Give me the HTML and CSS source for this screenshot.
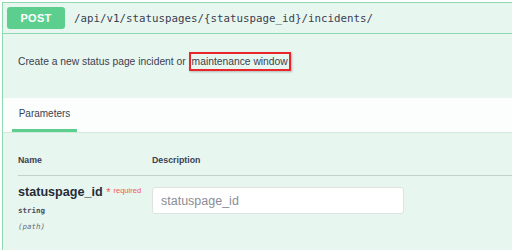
FILE: index.html
```html
<!DOCTYPE html>
<html lang="en">

<head>
    <meta charset="UTF-8">
    <meta name="viewport" content="width=device-width, initial-scale=1.0">
    <title>POST incidents</title>
    <link rel="stylesheet" href="styles.css">
</head>

<body>
    <div class="opblock">
        <div class="opblock-summary">
            <span class="method">POST</span>
            <span class="path">/api/v1/statuspages/{statuspage_id}/incidents/</span>
        </div>
        <div class="opblock-description">
            <p>Create a new status page incident or <span class="highlight">maintenance window</span></p>
        </div>
        <div class="tab-header">
            <div class="tab">Parameters</div>
        </div>
        <div class="parameters">
            <div class="param-head">
                <div class="col-name">Name</div>
                <div class="col-desc">Description</div>
            </div>
            <div class="param-row">
                <div class="col-name">
                    <div class="param-name">statuspage_id <span class="required">* <sup>required</sup></span></div>
                    <div class="param-type">string</div>
                    <div class="param-in">(path)</div>
                </div>
                <div class="col-desc">
                    <input type="text" placeholder="statuspage_id">
                </div>
            </div>
        </div>
    </div>
</body>

</html>
```

FILE: styles.css
```css
body {
    margin: 0;
    padding: 0;
    height: 250px;
    background-color: #fff;
    font-family: 'Liberation Sans', Arial, sans-serif;
    color: #3b4151;
    overflow: hidden;
}

.opblock {
    margin: 2px -10px 0 2px;
    height: 248px;
    border: 1px solid #8fd9b0;
    border-bottom: none;
    background-color: #e8f6f0;
}

.opblock-summary {
    display: flex;
    align-items: center;
    height: 30px;
    padding: 0 4px;
    border-bottom: 1px solid #8fd9b0;
}

.method {
    display: flex;
    align-items: center;
    justify-content: center;
    width: 58px;
    height: 22px;
    background-color: #5ccf8f;
    border-radius: 3px;
    color: #fff;
    font-weight: bold;
    font-size: 11px;
    letter-spacing: 0.3px;
}

.path {
    margin-left: 9px;
    font-family: 'DejaVu Sans Mono', monospace;
    font-size: 10.8px;
    color: #3b4151;
}

.opblock-description {
    box-sizing: border-box;
    height: 64px;
    padding: 22px 15px 0;
}

.opblock-description p {
    margin: 0;
    font-size: 10.3px;
    color: #3b4151;
}

.highlight {
    padding: 2px 1px 2px 1px;
    border: 2px solid #e8262b;
    box-shadow: 1px 1px 2px rgba(0, 0, 0, 0.25);
}

.tab-header {
    display: flex;
    height: 34px;
    padding: 0 0 0 9px;
    background-color: rgba(255, 255, 255, 0.85);
    border-bottom: 1px solid #d3e9de;
}

.tab {
    display: flex;
    align-items: center;
    justify-content: center;
    width: 65px;
    height: 31px;
    border-bottom: 3px solid #5ccf8f;
    font-size: 10px;
    color: #3b4151;
}

.parameters {
    padding: 22px 0 0 15px;
}

.param-head {
    display: flex;
    height: 20px;
    border-bottom: 1px solid #c4d1cb;
    font-size: 8.8px;
    font-weight: bold;
}

.col-name {
    width: 134px;
}

.col-desc {
    flex: 1;
}

.param-row {
    display: flex;
    padding-top: 9px;
}

.param-name {
    font-size: 12.6px;
    font-weight: 600;
    color: #262b38;
}

.required {
    color: #f25a5a;
    font-size: 11px;
    font-weight: normal;
}

.required sup {
    font-size: 7.5px;
    vertical-align: 3px;
}

.param-type {
    margin-top: 7px;
    font-family: 'DejaVu Sans Mono', monospace;
    font-size: 7.5px;
    font-weight: bold;
    color: #4a4f5c;
}

.param-in {
    margin-top: 7px;
    font-family: 'DejaVu Sans Mono', monospace;
    font-size: 7.5px;
    font-style: italic;
    color: #6b6f7a;
}

input {
    box-sizing: border-box;
    width: 252px;
    height: 27px;
    margin-top: 2px;
    padding: 0 8px;
    border: 1px solid #dde3e0;
    border-radius: 3px;
    background-color: #fff;
    font-family: 'Liberation Sans', Arial, sans-serif;
    font-size: 12.5px;
    color: #3b4151;
}

input::placeholder {
    color: #8a8d94;
}
```
